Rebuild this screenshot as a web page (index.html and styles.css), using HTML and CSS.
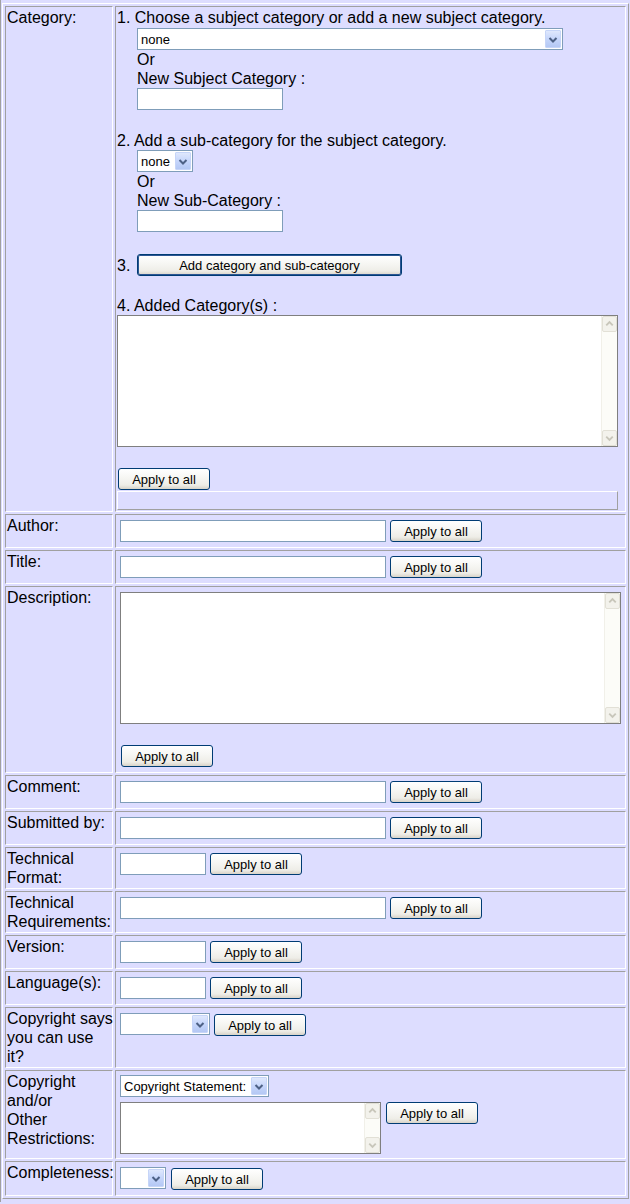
FILE: index.html
```html
<!DOCTYPE html>
<html>
<head>
<meta charset="utf-8">
<title>Metadata form</title>
<link rel="stylesheet" href="styles.css">
</head>
<body>
<div class="page">
<form class="form">
  <div class="lab">Category:</div>
  <div class="val cat">
    <div class="ln">1. Choose a subject category or add a new subject category.</div>
    <div class="ind m1">
      <span class="xsel s-wide"><select><option>none</option></select><span class="arr"><svg width="14" height="15" viewBox="0 0 14 15"><polyline points="3.5,6 7,9.5 10.5,6" fill="none" stroke="#4D6185" stroke-width="2"/></svg></span></span>
    </div>
    <div class="ind ln">Or</div>
    <div class="ind ln">New Subject Category :</div>
    <div class="ind"><input class="txt t146" type="text"></div>
    <div class="ln m21">2. Add a sub-category for the subject category.</div>
    <div class="ind">
      <span class="xsel s-none"><select><option>none</option></select><span class="arr"><svg width="14" height="15" viewBox="0 0 14 15"><polyline points="3.5,6 7,9.5 10.5,6" fill="none" stroke="#4D6185" stroke-width="2"/></svg></span></span>
    </div>
    <div class="ind ln">Or</div>
    <div class="ind ln">New Sub-Category :</div>
    <div class="ind"><input class="txt t146" type="text"></div>
    <div class="step3"><span class="num">3.</span><button class="btn btn-add" type="button">Add category and sub-category</button></div>
    <div class="ln m20">4. Added Category(s) :</div>
    <div class="ta ta-big"><textarea></textarea><div class="sb"><span class="sbb"><svg width="14" height="14" viewBox="0 0 14 14"><polyline points="3.5,8.5 7,5 10.5,8.5" fill="none" stroke="#C8C6BA" stroke-width="2"/></svg></span><span class="sbb"><svg width="14" height="14" viewBox="0 0 14 14"><polyline points="3.5,5.5 7,9 10.5,5.5" fill="none" stroke="#C8C6BA" stroke-width="2"/></svg></span></div></div>
    <button class="btn m21 ml1" type="button">Apply to all</button>
    <div class="box"></div>
  </div>

  <div class="lab">Author:</div>
  <div class="val"><input class="txt t266" type="text"><button class="btn" type="button">Apply to all</button></div>

  <div class="lab">Title:</div>
  <div class="val"><input class="txt t266" type="text"><button class="btn" type="button">Apply to all</button></div>

  <div class="lab">Description:</div>
  <div class="val col">
    <div class="ta ta-big"><textarea></textarea><div class="sb"><span class="sbb"><svg width="14" height="14" viewBox="0 0 14 14"><polyline points="3.5,8.5 7,5 10.5,8.5" fill="none" stroke="#C8C6BA" stroke-width="2"/></svg></span><span class="sbb"><svg width="14" height="14" viewBox="0 0 14 14"><polyline points="3.5,5.5 7,9 10.5,5.5" fill="none" stroke="#C8C6BA" stroke-width="2"/></svg></span></div></div>
    <button class="btn m21 ml1" type="button">Apply to all</button>
  </div>

  <div class="lab">Comment:</div>
  <div class="val"><input class="txt t266" type="text"><button class="btn" type="button">Apply to all</button></div>

  <div class="lab">Submitted by:</div>
  <div class="val"><input class="txt t266" type="text"><button class="btn" type="button">Apply to all</button></div>

  <div class="lab">Technical<br>Format:</div>
  <div class="val"><input class="txt t86" type="text"><button class="btn" type="button">Apply to all</button></div>

  <div class="lab">Technical<br>Requirements:</div>
  <div class="val"><input class="txt t266" type="text"><button class="btn" type="button">Apply to all</button></div>

  <div class="lab">Version:</div>
  <div class="val"><input class="txt t86" type="text"><button class="btn" type="button">Apply to all</button></div>

  <div class="lab">Language(s):</div>
  <div class="val"><input class="txt t86" type="text"><button class="btn" type="button">Apply to all</button></div>

  <div class="lab">Copyright says<br>you can use<br>it?</div>
  <div class="val">
    <span class="xsel s-90"><select><option></option></select><span class="arr"><svg width="14" height="15" viewBox="0 0 14 15"><polyline points="3.5,6 7,9.5 10.5,6" fill="none" stroke="#4D6185" stroke-width="2"/></svg></span></span>
    <button class="btn mt1" type="button">Apply to all</button>
  </div>

  <div class="lab">Copyright<br>and/or<br>Other<br>Restrictions:</div>
  <div class="val col crow">
    <span class="xsel s-149"><select><option>Copyright Statement:</option></select><span class="arr"><svg width="14" height="15" viewBox="0 0 14 15"><polyline points="3.5,6 7,9.5 10.5,6" fill="none" stroke="#4D6185" stroke-width="2"/></svg></span></span>
    <div class="crow-b">
      <div class="ta ta-small"><textarea></textarea><div class="sb"><span class="sbb"><svg width="14" height="14" viewBox="0 0 14 14"><polyline points="3.5,8.5 7,5 10.5,8.5" fill="none" stroke="#C8C6BA" stroke-width="2"/></svg></span><span class="sbb"><svg width="14" height="14" viewBox="0 0 14 14"><polyline points="3.5,5.5 7,9 10.5,5.5" fill="none" stroke="#C8C6BA" stroke-width="2"/></svg></span></div></div>
      <button class="btn" type="button">Apply to all</button>
    </div>
  </div>

  <div class="lab">Completeness:</div>
  <div class="val g5">
    <span class="xsel s-46"><select><option></option></select><span class="arr"><svg width="14" height="15" viewBox="0 0 14 15"><polyline points="3.5,6 7,9.5 10.5,6" fill="none" stroke="#4D6185" stroke-width="2"/></svg></span></span>
    <button class="btn mt1" type="button">Apply to all</button>
  </div>
</form>
</div>
</body>
</html>
```

FILE: styles.css
```css
* { box-sizing: border-box; }

body {
  margin: 0;
  background: #DDDDFF;
  font-family: "Liberation Sans", Arial, sans-serif;
  font-size: 16px;
  line-height: 19px;
  color: #000;
}

.page {
  padding: 3px 1px 3px 1px;
  border-left: 1px solid #A0A0A0;
}

.form {
  display: grid;
  grid-template-columns: 108px 511px;
  gap: 2px;
  padding: 2px;
  width: 627px;
  margin: 0;
  border: 1px solid;
  border-color: #FFFFFF #A0A0A0 #A0A0A0 #FFFFFF;
}

.lab {
  border: 1px solid;
  border-color: #A0A0A0 #FFFFFF #FFFFFF #A0A0A0;
  padding: 1px;
  white-space: nowrap;
}

.val {
  border: 1px solid;
  border-color: #A0A0A0 #FFFFFF #FFFFFF #A0A0A0;
  padding: 5px 4px;
  display: flex;
  align-items: flex-start;
  gap: 4px;
}

.val.col { flex-direction: column; gap: 0; }
.val.g5 { gap: 5px; }

.val.cat {
  padding: 1px;
  flex-direction: column;
  gap: 0;
}

.ln { height: 19px; white-space: nowrap; }
.ind { margin-left: 20px; display: flex; }

.step3 {
  display: flex;
  align-items: center;
  margin-top: 22px;
  height: 22px;
}
.step3 .num { width: 20px; }

/* text inputs */
.txt {
  height: 22px;
  margin: 0;
  padding: 1px 3px;
  border: 1px solid #7F9DB9;
  background: #FFFFFF;
  font: 13px "Liberation Sans", Arial, sans-serif;
}
.t146 { width: 146px; }
.t266 { width: 266px; }
.t86 { width: 86px; }

/* XP style buttons */
.btn {
  width: 92px;
  height: 22px;
  margin: 0;
  padding: 0;
  border: 1px solid #003C74;
  border-radius: 3px;
  background: linear-gradient(to bottom, #FFFFFF 0%, #F7F7F4 40%, #EEEDE7 80%, #D8D3C8 100%);
  font: 13px "Liberation Sans", Arial, sans-serif;
  color: #000;
  flex: none;
}
.btn-add {
  width: 265px;
  box-shadow: inset 0 0 0 1px #2B5593;
}

/* XP style selects */
.xsel {
  position: relative;
  display: inline-block;
  height: 22px;
  flex: none;
}
.xsel select {
  -webkit-appearance: none;
  appearance: none;
  width: 100%;
  height: 22px;
  margin: 0;
  padding: 0 18px 0 3px;
  border: 1px solid #7F9DB9;
  border-radius: 0;
  background: #FFFFFF;
  font: 13px "Liberation Sans", Arial, sans-serif;
  color: #000;
}
.xsel .arr {
  position: absolute;
  top: 2px;
  right: 2px;
  bottom: 2px;
  width: 16px;
  border: 1px solid #C6D5F8;
  border-radius: 1px;
  background: linear-gradient(to bottom, #DFE8FD 0%, #C6D6FB 50%, #B4C8F4 100%);
  display: flex;
  align-items: center;
  justify-content: center;
  pointer-events: none;
}
.s-wide { width: 426px; }
.s-none { width: 56px; }
.s-90 { width: 90px; }
.s-149 { width: 149px; }
.s-46 { width: 46px; }

/* textareas with XP style (disabled) scrollbar */
.ta {
  display: flex;
  border: 1px solid #7F7F7F;
  background: #FFFFFF;
  flex: none;
}
.ta textarea {
  flex: 1;
  border: none;
  margin: 0;
  padding: 2px;
  resize: none;
  outline: none;
  overflow: hidden;
  background: #FFFFFF;
  font: 13px "Liberation Sans", Arial, sans-serif;
}
.ta-big { width: 501px; height: 132px; }
.ta-small { width: 261px; height: 52px; }

.sb {
  width: 16px;
  display: flex;
  flex-direction: column;
  justify-content: space-between;
  background: #FCFCF8;
  border-left: 1px solid #F1F0E9;
}
.sbb {
  width: 15px;
  height: 16px;
  border: 1px solid #E2E0D6;
  border-radius: 2px;
  background: #F3F2EC;
  display: flex;
  align-items: center;
  justify-content: center;
}

.box {
  margin-top: 1px;
  width: 501px;
  height: 19px;
  border: 1px solid;
  border-color: #FFFFFF #A0A0A0 #A0A0A0 #FFFFFF;
}

.crow { padding-top: 4px; padding-bottom: 4px; }
.crow-b {
  display: flex;
  align-items: flex-start;
  gap: 5px;
  margin-top: 5px;
}

/* spacing utilities (kept last so they win over component rules) */
.m1 { margin-top: 1px; }
.m20 { margin-top: 20px; }
.m21 { margin-top: 21px; }
.ml1 { margin-left: 1px; }
.mt1 { margin-top: 1px; }
```
